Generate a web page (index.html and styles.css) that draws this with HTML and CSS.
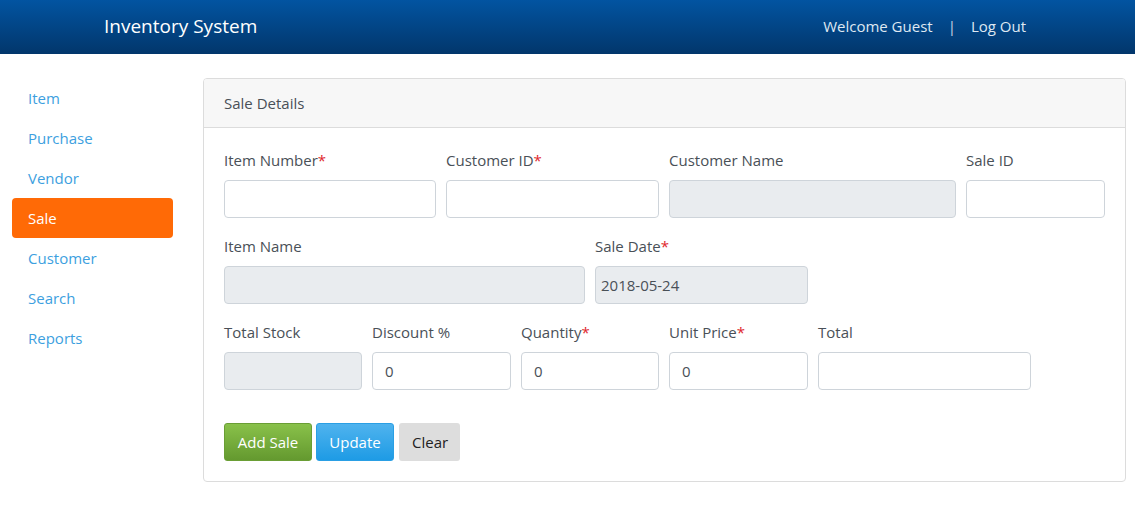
FILE: index.html
```html
<!DOCTYPE html>
<html>
<head>
<meta charset="utf-8">
<link rel="stylesheet" href="styles.css">
</head>
<body>
<header class="navbar">
  <div class="brand">Inventory System</div>
  <div class="user">
    <span>Welcome Guest</span>
    <span class="sep">|</span>
    <span>Log Out</span>
  </div>
</header>
<div class="main">
  <nav class="sidebar">
    <a class="nav-item">Item</a>
    <a class="nav-item">Purchase</a>
    <a class="nav-item">Vendor</a>
    <a class="nav-item active">Sale</a>
    <a class="nav-item">Customer</a>
    <a class="nav-item">Search</a>
    <a class="nav-item">Reports</a>
  </nav>
  <section class="card">
    <div class="card-header">Sale Details</div>
    <div class="card-body">
      <div class="row">
        <div class="field w212"><label>Item Number<span class="req">*</span></label><input class="input"></div>
        <div class="field w213"><label>Customer ID<span class="req">*</span></label><input class="input"></div>
        <div class="field w287"><label>Customer Name</label><input class="input" disabled></div>
        <div class="field w139"><label>Sale ID</label><input class="input"></div>
      </div>
      <div class="row">
        <div class="field w361"><label>Item Name</label><input class="input" disabled></div>
        <div class="field w213"><label>Sale Date<span class="req">*</span></label><input class="input" disabled value="2018-05-24"></div>
      </div>
      <div class="row">
        <div class="field w138"><label>Total Stock</label><input class="input" disabled></div>
        <div class="field w139"><label>Discount %</label><input class="input" value="0"></div>
        <div class="field w138"><label>Quantity<span class="req">*</span></label><input class="input" value="0"></div>
        <div class="field w139"><label>Unit Price<span class="req">*</span></label><input class="input" value="0"></div>
        <div class="field w213"><label>Total</label><input class="input"></div>
      </div>
      <div class="buttons">
        <button class="btn btn-green">Add Sale</button>
        <button class="btn btn-blue">Update</button>
        <button class="btn btn-grey">Clear</button>
      </div>
    </div>
  </section>
</div>
</body>
</html>
```

FILE: styles.css
```css
* { box-sizing: border-box; }
body {
  margin: 0;
  font-family: "Open Sans", "Noto Sans", sans-serif;
  font-size: 15px;
  color: #495057;
  background: #fff;
}
.navbar {
  height: 54px;
  background: linear-gradient(to bottom, #0254a1, #02366b);
  display: flex;
  align-items: center;
  justify-content: space-between;
  padding: 0 109px 0 104px;
  color: #fff;
}
.brand {
  font-size: 19px;
  color: #fff;
  margin-top: -2px;
}
.user {
  display: flex;
  gap: 15px;
  font-size: 15px;
  color: #dfe8f2;
  margin-top: -2px;
}
.user .sep { color: #c9d6e6; }
.main {
  display: flex;
  align-items: flex-start;
  padding: 24px 9px 0 12px;
  gap: 30px;
}
.sidebar {
  width: 161px;
  flex: none;
  display: flex;
  flex-direction: column;
}
.nav-item {
  height: 40px;
  line-height: 40px;
  padding-left: 16px;
  color: #3d9fe0;
  border-radius: 4px;
  font-size: 15px;
}
.nav-item.active {
  background: #ff6a06;
  color: #fff;
}
.card {
  flex: 1;
  border: 1px solid #dcdcdc;
  border-radius: 4px;
  overflow: hidden;
}
.card-header {
  height: 49px;
  background: #f7f7f7;
  border-bottom: 1px solid #dcdcdc;
  padding: 0 20px;
  line-height: 48px;
  font-size: 15px;
  color: #495057;
}
.card-body {
  padding: 20px 20px 20px 20px;
}
.row {
  display: flex;
  gap: 10px;
  margin-bottom: 16px;
}
.field {
  display: flex;
  flex-direction: column;
}
.field label {
  height: 24px;
  line-height: 24px;
  margin-bottom: 8px;
  font-size: 15px;
  color: #495057;
}
.req { color: #e0262d; }
.w138 { width: 138px; }
.w139 { width: 139px; }
.w212 { width: 212px; }
.w213 { width: 213px; }
.w287 { width: 287px; }
.w361 { width: 361px; }
.input {
  height: 38px;
  border: 1px solid #ced4da;
  border-radius: 4px;
  background: #fff;
  font-family: inherit;
  font-size: 15px;
  color: #495057;
  padding: 0 12px;
  width: 100%;
}
.input:disabled {
  background: #e9ecef;
  padding: 0 5px;
}
.buttons {
  display: flex;
  gap: 4px;
  padding-top: 17px;
}
.btn {
  height: 38px;
  border: 1px solid transparent;
  border-radius: 3px;
  font-family: inherit;
  font-size: 15px;
  color: #fff;
  padding: 0 12px;
}
.btn-green {
  background: linear-gradient(to bottom, #89c14a, #64992f);
  border-color: #6a9e35;
  width: 88px;
}
.btn-blue {
  background: linear-gradient(to bottom, #4fb3ee, #1e9be5);
  border-color: #2a9fe4;
  width: 78px;
}
.btn-grey {
  background: #dddddd;
  color: #222;
  width: 61px;
  margin-left: 1px;
}
```
